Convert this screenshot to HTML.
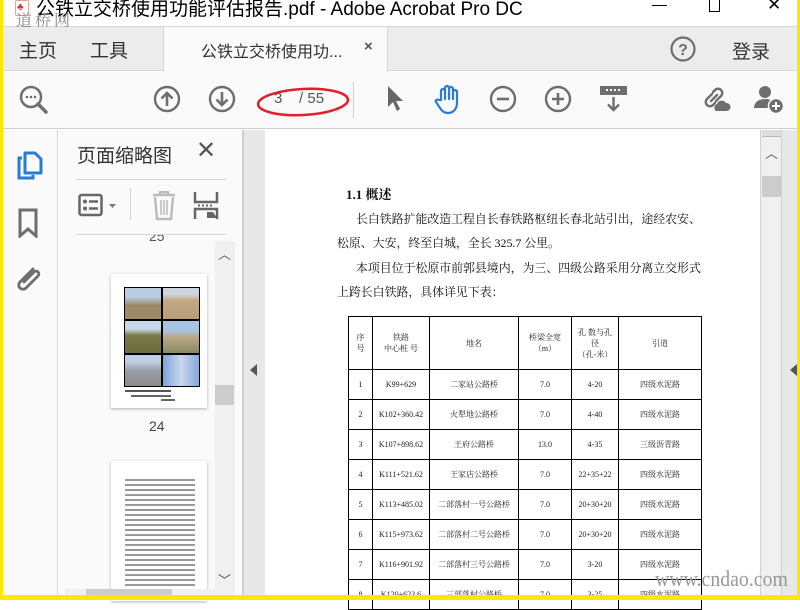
<!DOCTYPE html>
<html><head><meta charset="utf-8"><style>
*{margin:0;padding:0;box-sizing:border-box}
body{width:800px;height:600px;overflow:hidden;position:relative;background:#fff;font-family:"Liberation Sans","Noto Sans CJK SC",sans-serif;}
.a{position:absolute}
.doc{font-family:"Liberation Serif","Noto Serif CJK SC",serif;color:#111}
table{border-collapse:collapse;position:absolute;left:348px;top:316px;font-family:"Liberation Serif","Noto Serif CJK SC",serif;font-size:8px;color:#222}
td{border:1.5px solid #000;text-align:center;vertical-align:middle;height:30px;padding:0;line-height:11px}
</style></head><body>
<!-- title bar -->
<div class="a" style="left:0;top:0;width:800px;height:27px;background:#fff;border-bottom:1px solid #d6d6d6"></div>
<div class="a" style="left:15px;top:0px;width:14px;height:16px;border:1px solid #e6a0a0;border-radius:2px;background:#fff"></div>
<div class="a" style="left:17px;top:2px;color:#d33;font-size:10px">♣</div>
<div class="a" style="left:36px;top:-6px;font-size:19px;color:#000;white-space:nowrap">公铁立交桥使用功能评估报告.pdf - Adobe Acrobat Pro DC</div>
<div class="a" style="left:16px;top:11px;font-size:16px;line-height:18px;color:#8a8a8a;letter-spacing:3px;font-family:'Noto Serif CJK SC',serif">道桥网</div>
<div class="a" style="left:652px;top:5px;width:15px;height:1px;background:#000"></div>
<div class="a" style="left:709px;top:0px;width:11px;height:12px;border:1px solid #000;border-top:none"></div>
<div class="a" style="left:767px;top:-5px;font-size:17px">✕</div>
<!-- tab bar -->
<div class="a" style="left:0;top:27px;width:800px;height:44px;background:#ececec;border-bottom:1px solid #d6d6d6"></div>
<div class="a" style="left:163px;top:27px;width:225px;height:45px;background:#fafafa;border-left:1px solid #d6d6d6;border-right:1px solid #d6d6d6"></div>
<div class="a" style="left:19px;top:36px;font-size:19px;color:#333">主页</div>
<div class="a" style="left:90px;top:36px;font-size:19px;color:#333">工具</div>
<div class="a" style="left:201px;top:38px;font-size:16px;color:#333">公铁立交桥使用功...</div>
<div class="a" style="left:364px;top:38px;font-size:15px;color:#555;font-weight:bold">×</div>
<svg class="a" style="left:669px;top:35px" width="28" height="28"><circle cx="14" cy="14" r="11.5" fill="none" stroke="#6e6e6e" stroke-width="2.2"/><text x="14" y="20" text-anchor="middle" font-size="16" font-weight="bold" fill="#6e6e6e" font-family="Liberation Sans">?</text></svg>
<div class="a" style="left:732px;top:37px;font-size:19px;color:#333">登录</div>
<!-- toolbar -->
<div class="a" style="left:0;top:72px;width:800px;height:57px;background:#fafafa;border-bottom:1px solid #d0d0d0"></div>
<svg class="a" style="left:18px;top:84px" width="32" height="32"><circle cx="13" cy="13" r="10" fill="none" stroke="#6e6e6e" stroke-width="2.5"/><line x1="20" y1="20" x2="28" y2="28" stroke="#6e6e6e" stroke-width="3.5" stroke-linecap="round"/><circle cx="9" cy="13" r="1.3" fill="#6e6e6e"/><circle cx="13" cy="13" r="1.3" fill="#6e6e6e"/><circle cx="17" cy="13" r="1.3" fill="#6e6e6e"/></svg>
<svg class="a" style="left:153px;top:85px" width="28" height="28"><circle cx="14" cy="14" r="12" fill="none" stroke="#6e6e6e" stroke-width="2.4"/><path d="M14 21V8M8.5 13.5L14 8l5.5 5.5" fill="none" stroke="#6e6e6e" stroke-width="2.6"/></svg>
<svg class="a" style="left:208px;top:85px" width="28" height="28"><circle cx="14" cy="14" r="12" fill="none" stroke="#6e6e6e" stroke-width="2.4"/><path d="M14 7v13M8.5 14.5L14 20l5.5-5.5" fill="none" stroke="#6e6e6e" stroke-width="2.6"/></svg>
<div class="a" style="left:274px;top:90px;font-size:15px;color:#555">3&nbsp;&nbsp;&nbsp;&nbsp;/ 55</div>
<svg class="a" style="left:255px;top:84px" width="100" height="36"><ellipse cx="48" cy="18" rx="45" ry="13" fill="none" stroke="#e0202a" stroke-width="2.5" transform="rotate(-3 48 18)"/></svg>
<div class="a" style="left:353px;top:82px;width:1px;height:36px;background:#d0d0d0"></div>
<svg class="a" style="left:386px;top:85px" width="20" height="28"><path d="M2 1L2 22L7 17L11 26L14 24L10 16L17 16Z" fill="#666"/></svg>
<svg class="a" style="left:433px;top:84px" width="32" height="32"><path d="M8 16V7a2 2 0 0 1 4 0v8V4a2 2 0 0 1 4 0v11V5a2 2 0 0 1 4 0v10V8a2 2 0 0 1 4 0v11c0 6-4 10-9 10c-4 0-6-2-8-5l-4-6c-1-2 1-3 3-2z" fill="none" stroke="#2a7ad8" stroke-width="2.2" stroke-linejoin="round"/></svg>
<svg class="a" style="left:489px;top:85px" width="28" height="28"><circle cx="14" cy="14" r="12" fill="none" stroke="#6e6e6e" stroke-width="2.4"/><line x1="8" y1="14" x2="20" y2="14" stroke="#6e6e6e" stroke-width="2.6"/></svg>
<svg class="a" style="left:544px;top:85px" width="28" height="28"><circle cx="14" cy="14" r="12" fill="none" stroke="#6e6e6e" stroke-width="2.4"/><path d="M8 14h12M14 8v12" stroke="#6e6e6e" stroke-width="2.6"/></svg>
<svg class="a" style="left:599px;top:85px" width="30" height="28"><rect x="1" y="1" width="27" height="9" fill="#6e6e6e"/><g fill="#fff"><rect x="7" y="4" width="2" height="2"/><rect x="11" y="4" width="2" height="2"/><rect x="15" y="4" width="2" height="2"/><rect x="19" y="4" width="2" height="2"/></g><path d="M14.5 12v13M9 19.5l5.5 5.5 5.5-5.5" fill="none" stroke="#6e6e6e" stroke-width="2.4"/></svg>
<svg class="a" style="left:700px;top:84px" width="32" height="30"><path d="M12 10l-5 5a4 4 0 0 0 6 6l2-2M16 17l5-5a4 4 0 0 0-6-6l-2 2M11 17l6-6" fill="none" stroke="#6e6e6e" stroke-width="2.4" stroke-linecap="round"/><path d="M16 27a4 4 0 0 1 1-7a5 5 0 0 1 9-1a4 4 0 0 1 1 8z" fill="#6e6e6e"/></svg>
<svg class="a" style="left:753px;top:84px" width="34" height="32"><circle cx="12" cy="8" r="6" fill="#6e6e6e"/><path d="M1 24c0-6 5-9 11-9c4 0 6 1 7 2v7z" fill="#6e6e6e"/><circle cx="23" cy="22" r="7.5" fill="#6e6e6e" stroke="#fafafa" stroke-width="1.5"/><path d="M19 22h8M23 18v8" stroke="#fff" stroke-width="2"/></svg>
<!-- left rail -->
<div class="a" style="left:0;top:130px;width:58px;height:470px;background:#fafafa;border-right:1px solid #d6d6d6"></div>
<svg class="a" style="left:16px;top:150px" width="28" height="32"><path d="M6 8H3v20h14v-3" fill="none" stroke="#2a7ad8" stroke-width="3"/><path d="M9 3h10l6 6v14H9z" fill="none" stroke="#2a7ad8" stroke-width="3" stroke-linejoin="round"/></svg>
<svg class="a" style="left:18px;top:208px" width="22" height="30"><path d="M2 2h16v26l-8-7-8 7z" fill="none" stroke="#6e6e6e" stroke-width="3"/></svg>
<svg class="a" style="left:13px;top:264px" width="30" height="30"><path d="M20 5l-13 13a4 4 0 0 0 6 6l12-12a2.5 2.5 0 0 0-4-4l-10 10" fill="none" stroke="#6e6e6e" stroke-width="2.8" stroke-linecap="round"/></svg>
<!-- thumbnail panel -->
<div class="a" style="left:58px;top:130px;width:185px;height:470px;background:#fafafa;border-right:1px solid #d0d0d0"></div>
<div class="a" style="left:77px;top:141px;font-size:19px;color:#333">页面缩略图</div>
<div class="a" style="left:196px;top:136px;font-size:24px;color:#555">✕</div>
<div class="a" style="left:76px;top:179px;width:150px;height:1px;background:#d6d6d6"></div>
<svg class="a" style="left:78px;top:193px" width="46" height="26"><rect x="1.5" y="2" width="22" height="20" rx="2" fill="none" stroke="#666" stroke-width="2.5"/><circle cx="7" cy="8.5" r="2" fill="#666"/><circle cx="7" cy="15.5" r="2" fill="#666"/><path d="M11 8.5h9M11 15.5h9" stroke="#666" stroke-width="2.5"/><path d="M31 11h7l-3.5 4z" fill="#777"/></svg>
<div class="a" style="left:130px;top:188px;width:1px;height:32px;background:#d6d6d6"></div>
<svg class="a" style="left:151px;top:191px" width="28" height="30"><path d="M2 4h22M9 4V1h8v3M4 6l2 22h14l2-22" fill="none" stroke="#bbb" stroke-width="2.5"/><path d="M10 9v15M13 9v15M16 9v15" stroke="#bbb" stroke-width="1.5"/></svg>
<svg class="a" style="left:193px;top:191px" width="26" height="30"><path d="M2 1v10h22V1" fill="none" stroke="#666" stroke-width="2.5"/><path d="M2 28V18h22v10" fill="none" stroke="#666" stroke-width="2.5"/><path d="M5 14.5h2M9 14.5h2M13 14.5h2M17 14.5h2" stroke="#666" stroke-width="2"/><path d="M14 21h6l4 6h-10z" fill="#666"/></svg>
<div class="a" style="left:215px;top:241px;width:20px;height:354px;background:#f0f0f0"></div>
<div class="a" style="left:218px;top:244px;font-size:13px;color:#555">︿</div>
<div class="a" style="left:215px;top:385px;width:19px;height:20px;background:#ccc"></div>
<div class="a" style="left:218px;top:570px;font-size:13px;color:#555">﹀</div>
<div class="a" style="left:140px;top:235px;width:40px;height:12px;overflow:hidden"><div class="a" style="left:9px;top:-7px;font-size:14px;color:#555">25</div></div>
<div class="a" style="left:76px;top:234px;width:150px;height:1px;background:#d6d6d6"></div>
<div class="a" style="left:111px;top:274px;width:96px;height:134px;background:#fff;box-shadow:0 1px 3px rgba(0,0,0,.3)">
 <div class="a" style="left:13px;top:13px;width:76px;height:100px;background:#000;display:grid;grid-template-columns:1fr 1fr;grid-template-rows:1fr 1fr 1fr;gap:2px;padding:1px">
  <div style="background:linear-gradient(#b8cde0 30%,#9c8a6a 55%,#a08a64)"></div>
  <div style="background:linear-gradient(#ccd6e0 20%,#c4a882 40%,#b89c78)"></div>
  <div style="background:linear-gradient(#c8d8ea 25%,#7a7a48 45%,#6e6a40)"></div>
  <div style="background:linear-gradient(#a8c4e2 30%,#b8a888 50%,#8a8a60)"></div>
  <div style="background:linear-gradient(#c0d0e4 20%,#9aa0a8 50%,#8a8a88)"></div>
  <div style="background:linear-gradient(90deg,#7ca4d8,#c8d8ee 50%,#88a8d8)"></div>
 </div>
 <div class="a" style="left:14px;top:116px;width:46px;height:2px;background:#555"></div>
 <div class="a" style="left:20px;top:121px;width:40px;height:2px;background:#666"></div>
 <div class="a" style="left:50px;top:125px;width:14px;height:2px;background:#666"></div>
</div>
<div class="a" style="left:149px;top:418px;font-size:14px;color:#444">24</div>
<div class="a" style="left:111px;top:461px;width:96px;height:140px;background:#fff;box-shadow:0 1px 3px rgba(0,0,0,.3)">
 <div class="a" style="left:14px;top:15px;width:70px;height:120px;background:repeating-linear-gradient(#fff 0,#fff 3px,#555 3px,#555 5px);opacity:.6"></div>
</div>
<div class="a" style="left:65px;top:589px;width:152px;height:11px;background:#f0f0f0"></div>
<div class="a" style="left:86px;top:589px;width:86px;height:11px;background:#ccc"></div>
<!-- collapse strip -->
<div class="a" style="left:243px;top:130px;width:22px;height:470px;background:#e8e8e8;border-left:1px solid #d0d0d0"></div>
<svg class="a" style="left:249px;top:363px" width="10" height="14"><path d="M8 1L1 7l7 6z" fill="#555"/></svg>
<!-- document -->
<div class="a doc" style="left:346px;top:184px;font-size:13px;font-weight:bold">1.1 概述</div>
<div class="a doc" style="left:356px;top:210px;font-size:11.9px;white-space:nowrap">长白铁路扩能改造工程自长春铁路枢纽长春北站引出，途经农安、</div>
<div class="a doc" style="left:337px;top:234px;font-size:11.9px;white-space:nowrap">松原、大安，终至白城，全长 325.7 公里。</div>
<div class="a doc" style="left:356px;top:259px;font-size:11.9px;white-space:nowrap">本项目位于松原市前郭县境内，为三、四级公路采用分离立交形式</div>
<div class="a doc" style="left:337px;top:283px;font-size:11.9px;white-space:nowrap">上跨长白铁路，具体详见下表：</div>
<table>
<tr><td style="width:24px;height:53px">序<br>号</td><td style="width:57px">铁路<br>中心桩 号</td><td style="width:89px">地名</td><td style="width:53px">桥梁全宽<br>（m）</td><td style="width:47px">孔 数与孔<br>径<br>（孔-米）</td><td style="width:83px">引道</td></tr>
<tr><td>1</td><td>K99+629</td><td>二家站公路桥</td><td>7.0</td><td>4-20</td><td>四级水泥路</td></tr>
<tr><td>2</td><td>K102+360.42</td><td>火犁地公路桥</td><td>7.0</td><td>4-40</td><td>四级水泥路</td></tr>
<tr><td>3</td><td>K107+898.62</td><td>王府公路桥</td><td>13.0</td><td>4-35</td><td>三级沥青路</td></tr>
<tr><td>4</td><td>K111+521.62</td><td>王家店公路桥</td><td>7.0</td><td>22+35+22</td><td>四级水泥路</td></tr>
<tr><td>5</td><td>K113+485.02</td><td>二部落村一号公路桥</td><td>7.0</td><td>20+30+20</td><td>四级水泥路</td></tr>
<tr><td>6</td><td>K115+973.62</td><td>二部落村二号公路桥</td><td>7.0</td><td>20+30+20</td><td>四级水泥路</td></tr>
<tr><td>7</td><td>K116+901.92</td><td>二部落村三号公路桥</td><td>7.0</td><td>3-20</td><td>四级水泥路</td></tr>
<tr><td>8</td><td>K120+623.6</td><td>三部落村公路桥</td><td>7.0</td><td>3-25</td><td>四级水泥路</td></tr>
</table>
<!-- scrollbar -->
<div class="a" style="left:760px;top:130px;width:22px;height:470px;background:#f0f0f0;border-left:1px solid #d0d0d0;border-right:1px solid #d0d0d0"></div>
<div class="a" style="left:762px;top:130px;width:19px;height:7px;background:#ddd;border-bottom:1px solid #bbb"></div>
<div class="a" style="left:765px;top:143px;font-size:13px;color:#555">︿</div>
<div class="a" style="left:762px;top:176px;width:19px;height:21px;background:#ccc"></div>
<div class="a" style="left:782px;top:130px;width:15px;height:470px;background:#e8e8e8"></div>
<svg class="a" style="left:789px;top:363px" width="8" height="14"><path d="M8 1L1 7l7 6z" fill="#555"/></svg>
<div class="a" style="left:655px;top:566px;font-size:22px;color:#999;font-family:'Liberation Serif',serif;white-space:nowrap;transform:scaleX(.9);transform-origin:left">www.cndao.com</div>
<!-- yellow frame -->
<div class="a" style="left:0;top:0;width:3px;height:600px;background:#ffe800"></div>
<div class="a" style="left:797px;top:0;width:3px;height:600px;background:#ffe800"></div>
<div class="a" style="left:0;top:595px;width:800px;height:5px;background:#ffe800"></div>
</body></html>
